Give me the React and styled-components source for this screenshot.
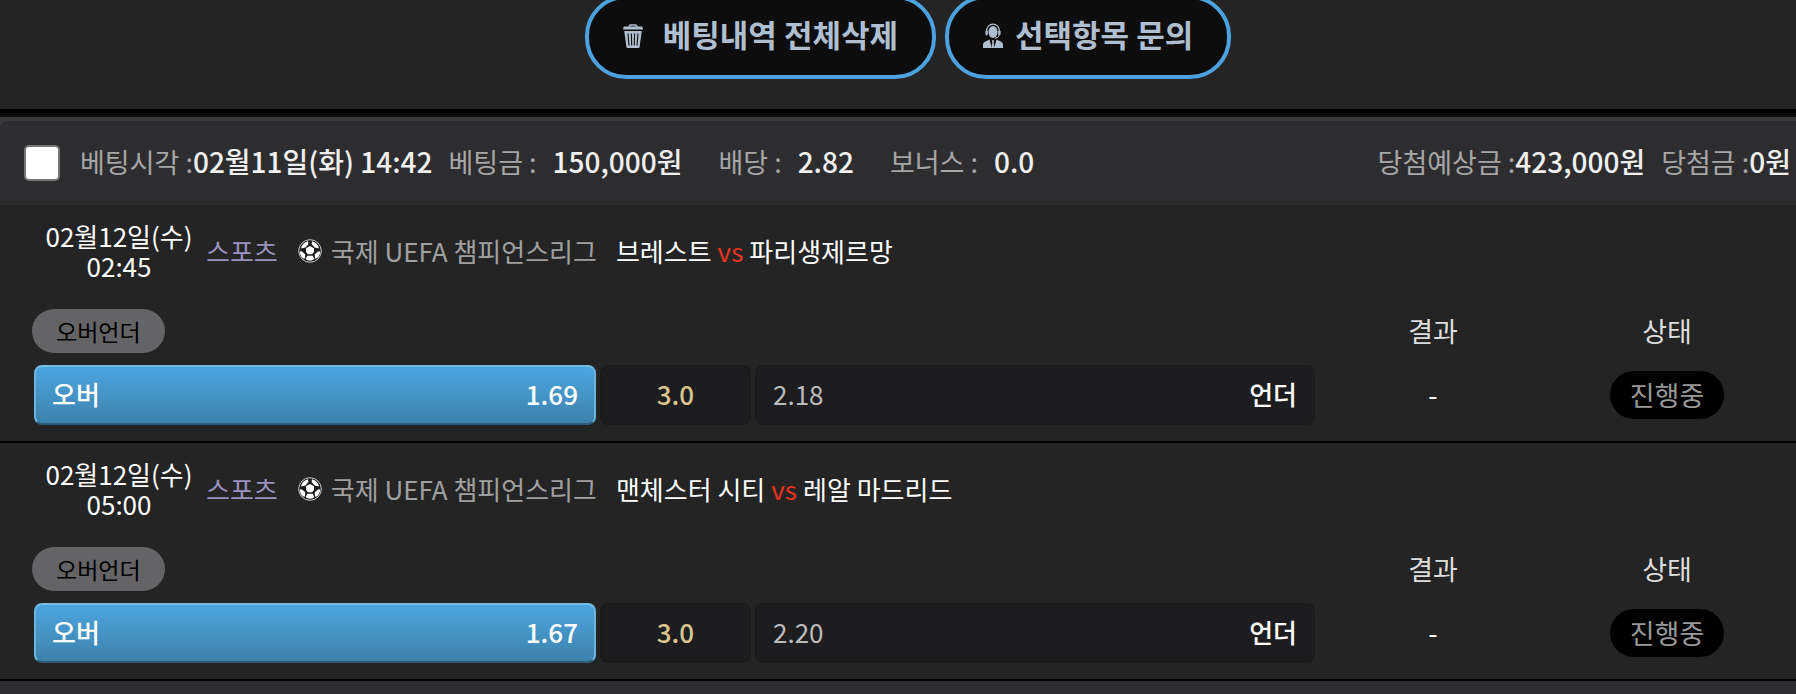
import React from "react";
import styled, {createGlobalStyle} from "styled-components";

const GlobalStyle = createGlobalStyle`
  * {
    box-sizing: border-box;
  }

  body {
    margin: 0;
    background: #242424;
    color: #fff;
    font-family: "Noto Sans CJK KR", sans-serif;
    font-size: 26px;
    line-height: 36px;
    overflow-x: hidden;
  }
`;

const Actions = styled.div`
  display: flex;
  justify-content: center;
  align-items: flex-end;
  gap: 9px;
  height: 109px;
  padding: 0 0 30px 20px;
`;

const ActionButton = styled.button`
  display: flex;
  align-items: center;
  gap: ${props => props.$gap};
  flex: none;
  height: 84px;
  padding: 0 34px 6px;
  border: 4px solid #4aa3df;
  border-radius: 41px;
  background: #0d0d0d;
  color: #b0bfcf;
  font: 700 31px/40px "Noto Sans CJK KR", sans-serif;
  white-space: nowrap;
`;

const Card = styled.section`
  border-top: 4px solid #000;
  background: #242424;
`;

const CardTop = styled.div`
  padding-top: 4px;
  border-top: 4px solid #0d0d0d;
  background: #3a3a3c;
`;

const CardHead = styled.header`
  display: flex;
  align-items: center;
  justify-content: space-between;
  height: 84px;
  padding: 0 5px 0 24px;
  border-top-left-radius: 8px;
  background: #2d2d2f;
  white-space: nowrap;
`;

const Group = styled.div`
  display: flex;
  align-items: center;
  gap: ${props => props.$gap || '16px'};
`;

const Check = styled.input`
  appearance: none;
  width: 36px;
  height: 36px;
  margin: 0 4px 0 0;
  border: 2px solid #767676;
  border-radius: 5px;
  background: #fff;

  &:checked {
    background: #4aa3df;
  }
`;

const Fact = styled.span`
  padding-bottom: 4px;
  color: #a6a6a6;
  font-size: 27px;

  b {
    margin-left: ${props => props.$gap || '0'};
    color: #f0f0f0;
    font-size: 28px;
    font-weight: 500;
  }
`;

const Match = styled.article`
  padding: 16px 12px 16px 32px;
  border-bottom: 2px solid #000;
`;

const MatchHead = styled.div`
  display: flex;
  align-items: center;
  height: 60px;
  white-space: nowrap;
`;

const When = styled.time`
  width: 174px;
  line-height: 30px;
  text-align: center;
`;

const Sport = styled.a`
  margin-right: 20px;
  color: #9a92bd;
  text-decoration: none;
`;

const League = styled.span`
  display: flex;
  align-items: center;
  gap: 9px;
  margin-right: 19px;
  color: #a0a0a0;
`;

const Versus = styled.span`
  margin: 0 6px;
  color: #ea3323;
`;

const Market = styled.table`
  width: 100%;
  margin-top: 28px;
  border-collapse: collapse;
  table-layout: fixed;

  th, td {
    width: 234px;
    padding: 0;
    font-size: 27px;
    font-weight: 400;
    text-align: center;
  }

  th {
    height: 56px;
    padding-bottom: 12px;
    color: #ddd;
  }

  th:first-child, td:first-child {
    width: auto;
    text-align: left;
  }
`;

const Tag = styled.span`
  display: block;
  width: max-content;
  padding: 0 24px;
  border-radius: 22px;
  background: #646466;
  color: #000;
  font-size: 23px;
  line-height: 44px;
`;

const Odds = styled.div`
  display: grid;
  grid-template-columns: 562fr 151fr 560fr;
  gap: 4px;
  padding: 0 1px 0 2px;
`;

const Pick = styled.div`
  display: flex;
  align-items: center;
  justify-content: ${props => props.$center ? 'center' : 'space-between'};
  height: 60px;
  padding: 0 16px 2px;
  border: 2px solid;
  border-color: ${props => props.$active ? '#74bcdf #6ab5de #2f5b76' : '#1b1b1c'};
  border-radius: 8px;
  background: ${props => props.$active ? 'linear-gradient(#4ca5df, #3d82ad)' : '#1d1d1f'};
  color: ${props => props.$color || '#fff'};
  font-size: 26px;
  font-weight: 500;

  b {
    color: #fff;
    font-weight: 500;
  }
`;

const Rate = styled.span`
  font-weight: ${props => props.$plain ? 400 : 500};
`;

const Status = styled.span`
  display: inline-block;
  padding: 0 20px;
  border-radius: 24px;
  background: #000;
  color: #999;
  line-height: 48px;
  vertical-align: middle;
`;

const NextCard = styled.div`
  height: 13px;
  background: #2d2d2f;
`;

const TrashIcon = () => <svg width="20" height="28" viewBox="0 0 20 28" aria-hidden="true">
  <path d="M6.5 7V5.8Q6.5 5 7.3 5h5.4q.8 0 .8.8V7" fill="none" stroke="currentColor" strokeWidth="1.6"/>
  <path d="M1.6 6.6h16.8q1 0 1.2 1l.4 2H0l.4-2q.2-1 1.2-1z" fill="currentColor"/>
  <path d="M1.2 11h17.6L16.6 27q-.1 1-1.2 1H4.6q-1.1 0-1.2-1z" fill="currentColor"/>
  <path d="M5 13.5l1 12M8.4 13.5l.3 12M11.6 13.5l-.3 12M15 13.5l-1 12" stroke="#0d0d0d" strokeWidth="1.1"/>
</svg>;

const AgentIcon = () => <svg width="20" height="28" viewBox="0 0 20 28" aria-hidden="true">
  <path d="M3.6 12C2.9 1.6 17.1 1.6 16.4 12" fill="none" stroke="currentColor" strokeWidth="1.2"/>
  <ellipse cx="10" cy="12" rx="4.6" ry="6" fill="currentColor"/>
  <rect x="2.4" y="10.4" width="2.4" height="5" rx="1.1" fill="currentColor"/>
  <rect x="15.2" y="10.4" width="2.4" height="5" rx="1.1" fill="currentColor"/>
  <path d="M16.4 15q-.6 2.8-4.4 3.4" fill="none" stroke="currentColor"/>
  <path d="M0 28v-3.2q0-2.4 2.4-3.4l4-1.8L9 28zM20 28v-3.2q0-2.4-2.4-3.4l-4-1.8L11 28z" fill="currentColor"/>
  <path d="M8.8 20.2h2.4l-.5 2L11.3 28H8.7l.6-5.8z" fill="currentColor"/>
</svg>;

const BallIcon = () => <svg width="24" height="24" viewBox="0 0 24 24" aria-hidden="true">
  <circle cx="12" cy="12" r="11.3" fill="#1c1c1c" stroke="#ccc" strokeWidth="1"/>
  <g fill="#fff">
    <path d="M12 7l4 2.2v3.8l-2 2.2h-4l-2-2.2V9.2z"/>
    <path d="M10 2.2l.4 2.8-3 3.6-4.4.8Q4.4 3.4 10 2.2z"/>
    <path d="M14 2.2l-.4 2.8 3 3.6 4.4.8Q19.6 3.4 14 2.2z"/>
    <path d="M1.8 12.2l2.2.2 3.2 2.8-.2 4.2-1.6.2Q1.8 16.8 1.8 12.2z"/>
    <path d="M22.2 12.2l-2.2.2-3.2 2.8.2 4.2 1.6.2q3.6-2.8 3.6-7.4z"/>
    <path d="M9.4 16.8h5.2l1.8 3.2q-1.8 1.8-4.4 1.8T7.6 20z"/>
  </g>
</svg>;

const matches = [
  {id: 1, time: '02:45', home: '브레스트', away: '파리생제르망', over: '1.69', under: '2.18'},
  {id: 2, time: '05:00', home: '맨체스터 시티', away: '레알 마드리드', over: '1.67', under: '2.20'},
];

export default class extends React.Component {
  renderMatch = (row) => {
    return <Match key={row.id}>
      <MatchHead>
        <When>02월12일(수)<br/>{row.time}</When>
        <Sport href="#sports">스포츠</Sport>
        <League><BallIcon/>국제 UEFA 챔피언스리그</League>
        <span>{row.home}<Versus>vs</Versus>{row.away}</span>
      </MatchHead>
      <Market>
        <thead>
          <tr>
            <th><Tag>오버언더</Tag></th>
            <th>결과</th>
            <th>상태</th>
          </tr>
        </thead>
        <tbody>
          <tr>
            <td>
              <Odds>
                <Pick $active><b>오버</b><Rate>{row.over}</Rate></Pick>
                <Pick $center $color="#d9c68f">3.0</Pick>
                <Pick $color="#bbb"><Rate $plain>{row.under}</Rate><b>언더</b></Pick>
              </Odds>
            </td>
            <td>-</td>
            <td><Status>진행중</Status></td>
          </tr>
        </tbody>
      </Market>
    </Match>;
  };

  render() {
    return <>
      <GlobalStyle/>
      <Actions>
        <ActionButton type="button" $gap="20px"><TrashIcon/>베팅내역 전체삭제</ActionButton>
        <ActionButton type="button" $gap="12px"><AgentIcon/>선택항목 문의</ActionButton>
      </Actions>
      <Card>
        <CardTop>
          <CardHead>
            <Group $gap="36px">
              <Group>
                <Check type="checkbox" id="bet-1" aria-labelledby="bet-1-time"/>
                <Fact as="label" htmlFor="bet-1" id="bet-1-time">베팅시각 :<b>02월11일(화) 14:42</b></Fact>
                <Fact $gap="16px">베팅금 :<b>150,000원</b></Fact>
              </Group>
              <Fact $gap="16px">배당 :<b>2.82</b></Fact>
              <Fact $gap="16px">보너스 :<b>0.0</b></Fact>
            </Group>
            <Group>
              <Fact>당첨예상금 :<b>423,000원</b></Fact>
              <Fact>당첨금 :<b>0원</b></Fact>
            </Group>
          </CardHead>
        </CardTop>
        {matches.map(this.renderMatch)}
      </Card>
      <NextCard/>
    </>;
  }
}
